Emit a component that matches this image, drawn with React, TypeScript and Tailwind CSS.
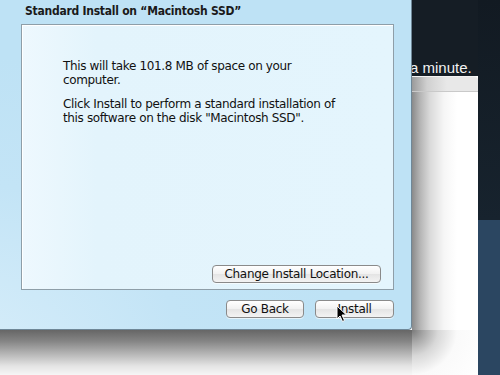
import React from "react";

const MacButton = ({ label, className = "" }: { label: string; className?: string }) => (
  <div
    className={`flex h-[18px] items-center justify-center rounded-[4px] border border-[#8a8a8a] bg-[linear-gradient(#ffffff,#f1f1f1_50%,#e4e4e4_51%,#f3f3f3)] text-[12px] leading-none tracking-[-0.3px] text-[#111] shadow-[0_1px_0_rgba(255,255,255,0.6)] ${className}`}
  >
    {label}
  </div>
);

const Cursor = () => (
  <svg width="12" height="18" viewBox="0 0 12 18" className="absolute left-[336px] top-[305px] z-30">
    <path d="M1 1 L1 14 L4 11 L6.5 16.5 L8.5 15.5 L6 10 L10.5 10 Z" fill="#000" stroke="#fff" strokeWidth="1" strokeLinejoin="round" />
  </svg>
);

export default function App() {
  return (
    <div className="relative flex h-[375px] w-[500px] overflow-hidden bg-white font-['DejaVu_Sans',sans-serif]">
      {/* installer dialog column */}
      <div className="flex w-[412px] flex-col">
        <div className="relative z-10 flex h-[330px] flex-col rounded-br-[4px] border-r border-b border-[#6f8797] bg-[radial-gradient(ellipse_at_-10%_110%,#d8eefa_0%,#c3e4f6_35%,#bee2f5_60%)]">
          <div className="pl-[25px] pt-[4px] font-['DejaVu_Sans_Condensed','DejaVu_Sans',sans-serif] text-[12px] font-bold leading-[15px] tracking-[-0.25px] text-[#1a1a1a]">
            Standard Install on “Macintosh SSD”
          </div>
          <div className="ml-[21px] mt-[5px] flex h-[266px] w-[373px] flex-col border border-[#8e9ea8] bg-[linear-gradient(90deg,#eef8fe,#e3f4fc_20%,#e4f5fd)] shadow-[inset_1px_1px_0_#ffffff]">
            <div className="pl-[41px] pt-[34px] text-[12px] leading-[14px] tracking-[-0.35px] text-[#111]">
              <p>This will take 101.8 MB of space on your</p>
              <p>computer.</p>
              <p className="mt-[10px]">Click Install to perform a standard installation of</p>
              <p>this software on the disk "Macintosh SSD".</p>
            </div>
            <div className="mt-auto flex justify-end pb-[6px] pr-[12px]">
              <MacButton label="Change Install Location..." className="w-[169px]" />
            </div>
          </div>
          <div className="mt-[10px] flex justify-end gap-[11px] pr-[17px]">
            <MacButton label="Go Back" className="w-[78px]" />
            <MacButton label="Install" className="w-[79px]" />
          </div>
        </div>
        {/* drop shadow under the dialog */}
        <div className="flex-1 bg-[linear-gradient(#666,#858585_25%,#b9b9b9_55%,#e4e4e4_80%,#f6f6f6)]" />
      </div>

      {/* window behind */}
      <div className="flex w-[66px] flex-col">
        <div className="flex h-[76px] flex-col justify-end bg-[#151d25]">
          <span className="-ml-[2px] whitespace-nowrap font-['Liberation_Sans',sans-serif] text-[15px] leading-[16px] text-[#f2f2f2]">
            a minute.
          </span>
        </div>
        <div className="flex flex-1 flex-col rounded-tr-[4px] bg-white">
          <div className="h-[16px] rounded-tr-[4px] border-t border-[#f4f4f4] border-b border-b-[#c9c9c9] bg-[linear-gradient(90deg,#9a9a9a,#d0d0d0_15px,#e8e8e8_35px)]" />
          <div className="h-[238px] bg-[linear-gradient(90deg,#8a8a8a,#b4b4b4_8px,#dadada_18px,#f6f6f6_32px,#fff_45px)]" />
          <div className="flex-1 bg-[radial-gradient(circle_at_0_0,#7a7a7a,#a8a8a8_12px,#d8d8d8_26px,#fafafa_45px,#fff)]" />
        </div>
      </div>

      {/* desktop right */}
      <div className="flex flex-1 flex-col">
        <div className="h-[220px] bg-[linear-gradient(#121a22,#17232e)]" />
        <div className="flex-1 bg-[#2b4661]" />
      </div>

      <Cursor />
    </div>
  );
}
